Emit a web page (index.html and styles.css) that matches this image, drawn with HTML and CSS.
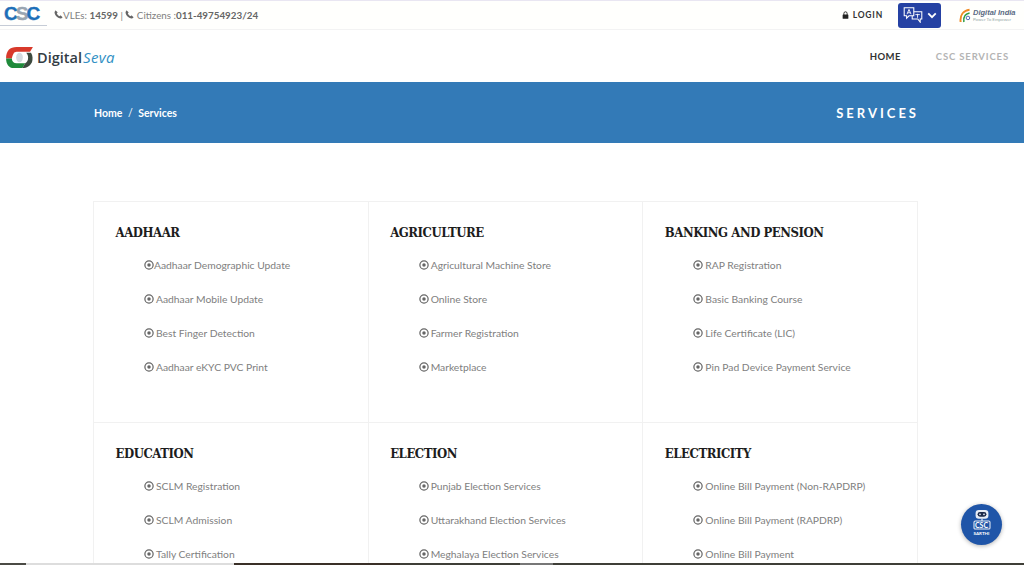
FILE: index.html
```html
<!DOCTYPE html>
<html>
<head>
    <title>Services - Digital Seva</title>
    <link rel="stylesheet" href="styles.css">
</head>
<body>
    <svg class="icon-defs" width="0" height="0">
        <symbol id="ring" viewBox="0 0 16 16">
            <circle cx="8" cy="8" r="6.600" fill="none" stroke="currentColor" stroke-width="2"/>
            <circle cx="8" cy="8" r="2.800" fill="currentColor"/>
        </symbol>
        <symbol id="phone" viewBox="0 0 16 16">
            <path d="M3.400 1.200 6 3.600c.4.400.4.900.1 1.300L5 6.300c.7 1.900 2.800 4 4.700 4.700l1.400-1.100c.4-.3.900-.3 1.300.1l2.400 2.600c.4.400.3 1-.1 1.300-1 .9-2.200 1.400-3.500 1.100C5.900 13.900 2.100 10.100 1 5.300.7 4 1.200 2.800 2.100 1.300c.3-.4.900-.5 1.300-.1z" fill="currentColor"/>
        </symbol>
    </svg>

    <div class="topbar">
        <div class="topbar-left">
            <div class="csc-logo">
                <div class="csc-letters"><span>C</span><span class="csc-mid">S</span><span>C</span></div>
                <div class="csc-strap"></div>
            </div>
            <div class="contact">
                <svg class="phone-icon"><use href="#phone"/></svg>VLEs: <b>14599</b> | <svg class="phone-icon"><use href="#phone"/></svg> Citizens :<b>011-49754923/24</b>
            </div>
        </div>
        <div class="topbar-right">
            <div class="login">
                <svg class="lock-icon" viewBox="0 0 12 14">
                    <path d="M3.200 7V4.200a2.800 2.800 0 0 1 5.600 0V7" fill="none" stroke="currentColor" stroke-width="1.600"/>
                    <rect x="1" y="6" width="10" height="7.500" rx="1" fill="currentColor"/>
                </svg>
                LOGIN
            </div>
            <div class="lang-button">
                <svg class="lang-icon" viewBox="0 0 24 20">
                    <path d="M1 1h12v10H7l-3 3v-3H1z" fill="none" stroke="#fff" stroke-width="1.300"/>
                    <path d="M13 6h10v9h-2v4l-3-4h-7v-4" fill="none" stroke="#fff" stroke-width="1.300"/>
                    <path d="M4.500 9l2.500-6L9.500 9M5.500 7.200h3" fill="none" stroke="#fff" stroke-width="1.100"/>
                    <path d="M15 9.500h5.500M17.700 8.500v5" fill="none" stroke="#fff" stroke-width="1.100"/>
                </svg>
                <svg class="chevron" viewBox="0 0 12 8">
                    <path d="M1.500 1.500 6 6l4.500-4.500" fill="none" stroke="#fff" stroke-width="2.200"/>
                </svg>
            </div>
            <div class="di-logo">
                <svg class="di-mark" viewBox="0 0 16 18">
                    <path d="M2 17C1 9 5 3 13 2" fill="none" stroke="#f08a24" stroke-width="2.400"/>
                    <path d="M6 17C5 11 8 7 13 6" fill="none" stroke="#2f9e44" stroke-width="2"/>
                    <circle cx="11" cy="12" r="2.200" fill="none" stroke="#2b4aa8" stroke-width="1"/>
                </svg>
                <div class="di-text">
                    <div class="di-name">Digital India</div>
                    <div class="di-tag">Power To Empower</div>
                </div>
            </div>
        </div>
    </div>

    <div class="navbar">
        <div class="brand">
            <svg class="brand-mark" viewBox="0 0 30 24">
                <path d="M29 1 26 6H12C9 6 8 9 7 13H1C1 5 5 1 12 1z" fill="#d8392b"/>
                <path d="M1 13h6c0 3 2 5 5 5h9l-3 5H9c-5 0-8-4-8-10z" fill="#1f8a3b"/>
                <path d="M22 7h5c2 3 2 7 1 10-2 4-5 6-10 6l3-5c2-1 3-3 3-6 0-2-1-4-2-5z" fill="#3d4a3f"/>
                <ellipse cx="15" cy="12" rx="3.500" ry="5" fill="#d5dbe0"/>
            </svg>
            <span class="brand-digital">Digital</span><span class="brand-seva">Seva</span>
        </div>
        <div class="nav-links">
            <a class="nav-link active">HOME</a>
            <a class="nav-link">CSC SERVICES</a>
        </div>
    </div>

    <div class="banner">
        <div class="crumbs">Home <span class="crumb-sep">/</span> Services</div>
        <div class="banner-title">SERVICES</div>
    </div>

    <div class="services">
        <div class="card">
            <h3>AADHAAR</h3>
            <ul>
                <li><svg class="ring tight"><use href="#ring"/></svg>Aadhaar Demographic Update</li>
                <li><svg class="ring"><use href="#ring"/></svg>Aadhaar Mobile Update</li>
                <li><svg class="ring"><use href="#ring"/></svg>Best Finger Detection</li>
                <li><svg class="ring"><use href="#ring"/></svg>Aadhaar eKYC PVC Print</li>
            </ul>
        </div>
        <div class="card">
            <h3>AGRICULTURE</h3>
            <ul>
                <li><svg class="ring"><use href="#ring"/></svg>Agricultural Machine Store</li>
                <li><svg class="ring"><use href="#ring"/></svg>Online Store</li>
                <li><svg class="ring"><use href="#ring"/></svg>Farmer Registration</li>
                <li><svg class="ring"><use href="#ring"/></svg>Marketplace</li>
            </ul>
        </div>
        <div class="card">
            <h3>BANKING AND PENSION</h3>
            <ul>
                <li><svg class="ring"><use href="#ring"/></svg>RAP Registration</li>
                <li><svg class="ring"><use href="#ring"/></svg>Basic Banking Course</li>
                <li><svg class="ring"><use href="#ring"/></svg>Life Certificate (LIC)</li>
                <li><svg class="ring"><use href="#ring"/></svg>Pin Pad Device Payment Service</li>
            </ul>
        </div>
        <div class="card">
            <h3>EDUCATION</h3>
            <ul>
                <li><svg class="ring"><use href="#ring"/></svg>SCLM Registration</li>
                <li><svg class="ring"><use href="#ring"/></svg>SCLM Admission</li>
                <li><svg class="ring"><use href="#ring"/></svg>Tally Certification</li>
            </ul>
        </div>
        <div class="card">
            <h3>ELECTION</h3>
            <ul>
                <li><svg class="ring"><use href="#ring"/></svg>Punjab Election Services</li>
                <li><svg class="ring"><use href="#ring"/></svg>Uttarakhand Election Services</li>
                <li><svg class="ring"><use href="#ring"/></svg>Meghalaya Election Services</li>
            </ul>
        </div>
        <div class="card">
            <h3>ELECTRICITY</h3>
            <ul>
                <li><svg class="ring"><use href="#ring"/></svg>Online Bill Payment (Non-RAPDRP)</li>
                <li><svg class="ring"><use href="#ring"/></svg>Online Bill Payment (RAPDRP)</li>
                <li><svg class="ring"><use href="#ring"/></svg>Online Bill Payment</li>
            </ul>
        </div>
    </div>

    <div class="sarthi">
        <svg class="bot" viewBox="0 0 30 26">
            <rect x="7" y="1" width="16" height="11" rx="4" fill="#e8edf5"/>
            <rect x="9.500" y="3.500" width="11" height="6" rx="3" fill="#1c2a4a"/>
            <circle cx="12.500" cy="6.500" r="1.100" fill="#e8edf5"/>
            <circle cx="17.500" cy="6.500" r="1.100" fill="#e8edf5"/>
            <rect x="5" y="15" width="20" height="10" rx="1.500" fill="none" stroke="#e8edf5" stroke-width="1.300"/>
            <path d="M15 12v3" stroke="#e8edf5" stroke-width="1.500"/>
        </svg>
        <div class="bot-csc">CSC</div>
        <div class="bot-name">SARTHI</div>
    </div>

    <div class="bottom-strip">
        <div class="strip-dark"></div>
        <div class="strip-light"></div>
        <div class="strip-brown"></div>
        <div class="strip-olive"></div>
        <div class="strip-grey"></div>
        <div class="strip-olive grow"></div>
    </div>
</body>
</html>
```

FILE: styles.css
```css
html, body {
    height: 565px;
    overflow: hidden;
}

body {
    font-family: 'Lato', Arial, sans-serif;
    background-color: #fff;
    color: #777;
    margin: 0;
    padding: 0;
    position: relative;
}

.icon-defs {
    display: block;
}

.topbar {
    display: flex;
    justify-content: space-between;
    height: 30px;
    border-top: 1px solid #e9e6f2;
    border-bottom: 1px solid #f3f3f3;
    box-sizing: border-box;
    background-color: #fffffd;
}

.topbar-left {
    display: flex;
    align-items: center;
}

.csc-logo {
    width: 47px;
    padding-left: 4px;
    box-sizing: border-box;
}

.csc-letters {
    font-family: 'Liberation Sans', Arial, sans-serif;
    font-size: 19px;
    font-weight: 700;
    line-height: 17px;
    color: #1d6fb8;
    letter-spacing: -2px;
    -webkit-text-stroke: 0.4px #1d6fb8;
}

.csc-mid {
    color: #9aa5b1;
    -webkit-text-stroke: 0.4px #9aa5b1;
}

.csc-strap {
    height: 1px;
    margin: 3px 0 0 -4px;
    background-color: #c6ccd6;
}

.contact {
    margin-left: 7px;
    font-size: 9.800px;
    color: #808080;
    white-space: nowrap;
}

.contact b {
    color: #666;
}

.phone-icon {
    width: 9px;
    height: 9px;
    color: #666;
}

.topbar-right {
    display: flex;
    align-items: center;
}

.login {
    display: flex;
    align-items: center;
    gap: 4px;
    margin-right: 15px;
    font-size: 8.500px;
    font-weight: 700;
    letter-spacing: 0.800px;
    color: #333;
}

.lock-icon {
    width: 7px;
    height: 8px;
    color: #222;
}

.lang-button {
    display: flex;
    align-items: center;
    justify-content: center;
    gap: 4px;
    width: 43px;
    height: 25px;
    border-radius: 3px;
    background-color: #2541a3;
}

.lang-icon {
    width: 20px;
    height: 16px;
}

.chevron {
    width: 10px;
    height: 7px;
}

.di-logo {
    display: flex;
    align-items: center;
    gap: 1px;
    width: 65px;
    margin-left: 18px;
}

.di-mark {
    width: 13px;
    height: 15px;
}

.di-name {
    font-family: 'Liberation Sans', Arial, sans-serif;
    font-size: 7.500px;
    font-weight: 700;
    font-style: italic;
    line-height: 8px;
    color: #5b6b84;
    white-space: nowrap;
}

.di-tag {
    font-size: 4.500px;
    line-height: 5px;
    color: #9aa;
    white-space: nowrap;
}

.navbar {
    display: flex;
    justify-content: space-between;
    align-items: center;
    height: 52px;
}

.brand {
    display: flex;
    align-items: center;
    padding-left: 5px;
    padding-top: 2px;
}

.brand-mark {
    width: 29px;
    height: 23px;
    margin-right: 3px;
}

.brand-digital {
    font-family: 'Open Sans', Arial, sans-serif;
    font-size: 14.500px;
    font-weight: 600;
    color: #333c44;
}

.brand-seva {
    font-family: 'Open Sans', Arial, sans-serif;
    font-size: 15px;
    font-style: italic;
    letter-spacing: 0.400px;
    color: #2f8fc4;
    margin-left: 1px;
}

.nav-links {
    display: flex;
    gap: 35px;
    padding-right: 15px;
}

.nav-link {
    font-size: 9.500px;
    font-weight: 700;
    letter-spacing: 0.850px;
    color: #b4b4b4;
}

.nav-link.active {
    color: #333;
    letter-spacing: 0.400px;
}

.banner {
    display: flex;
    justify-content: space-between;
    align-items: center;
    height: 61px;
    padding: 0 105px 0 94px;
    background-color: #337ab7;
    color: #fff;
}

.crumbs {
    font-size: 10.500px;
    font-weight: 700;
}

.crumb-sep {
    margin: 0 3px;
    font-weight: 400;
}

.banner-title {
    font-size: 13px;
    font-weight: 700;
    letter-spacing: 3px;
}

.services {
    display: grid;
    grid-template-columns: repeat(3, 1fr);
    grid-auto-rows: 220.500px;
    width: 825px;
    height: 364px;
    overflow: hidden;
    margin: 58px 0 0 93px;
    border-top: 1px solid #f1f1f1;
    border-left: 1px solid #f1f1f1;
    box-sizing: border-box;
}

.card {
    padding: 22px 21px 0 21.500px;
    border-right: 1px solid #f1f1f1;
    border-bottom: 1px solid #f1f1f1;
}

.card h3 {
    margin: 0;
    font-family: 'DejaVu Serif', 'Liberation Serif', serif;
    font-stretch: condensed;
    font-size: 13px;
    line-height: 18px;
    font-weight: 700;
    letter-spacing: -0.450px;
    color: #1c1c1c;
}

.card ul {
    list-style: none;
    margin: 6px 0 0 0;
    padding: 0 0 0 28.500px;
}

.card li {
    display: flex;
    align-items: center;
    height: 34px;
    font-size: 10.300px;
    color: #808080;
    white-space: nowrap;
}

.ring {
    width: 10px;
    height: 10px;
    margin-right: 2px;
    color: #666;
    flex-shrink: 0;
}

.ring.tight {
    margin-right: 0;
}

.sarthi {
    position: absolute;
    left: 961px;
    top: 504px;
    width: 41px;
    height: 41px;
    border-radius: 50%;
    background-color: #1f55a8;
    box-shadow: 0 1px 4px rgba(0, 0, 0, 0.3);
    text-align: center;
    color: #fff;
    overflow: hidden;
}

.bot {
    display: block;
    width: 24px;
    height: 21px;
    margin: 5px auto 0;
}

.bot-csc {
    position: absolute;
    left: 0;
    right: 0;
    top: 17px;
    font-size: 7px;
    font-weight: 700;
    line-height: 8px;
}

.bot-name {
    font-size: 4.500px;
    font-weight: 700;
    line-height: 6px;
    margin-top: 1px;
}

.bottom-strip {
    position: absolute;
    left: 0;
    right: 0;
    bottom: 0;
    display: flex;
    height: 2px;
}

.strip-dark {
    width: 26px;
    background-color: #4b4b45;
}

.strip-light {
    width: 208px;
    background-color: #ddd;
}

.strip-brown {
    width: 166px;
    background-color: #3a3028;
}

.strip-olive {
    width: 120px;
    background-color: #3f3f38;
}

.strip-olive.grow {
    flex: 1;
}

.strip-grey {
    width: 33px;
    background-color: #777;
}
```
